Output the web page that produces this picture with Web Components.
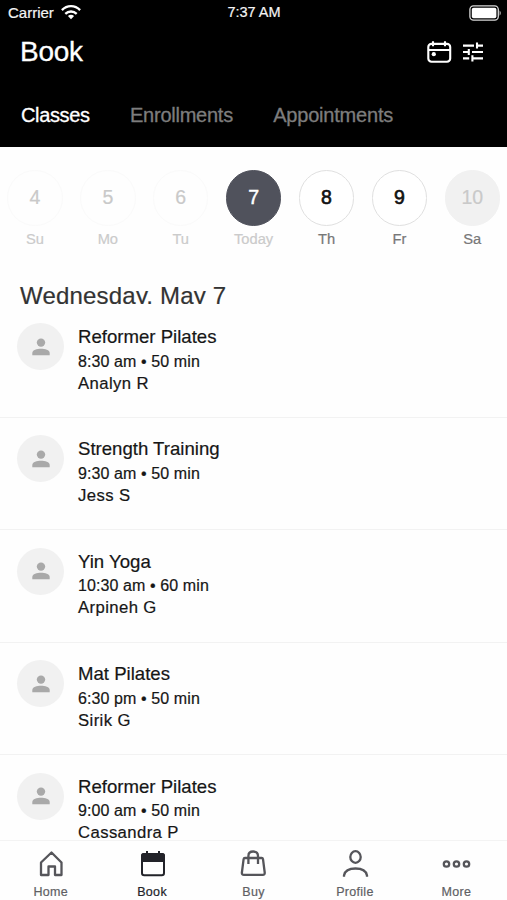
<!DOCTYPE html>
<html lang="en">
<head>
<meta charset="utf-8">
<title>Book</title>
<style>
body{margin:0;background:#fefefe;font-family:"Liberation Sans",Arial,sans-serif;overflow:hidden}
</style>
</head>
<body>
<booking-app></booking-app>
<script>
const define = (name, markup) => customElements.define(name, class extends HTMLElement {
  connectedCallback() {
    if (this.shadowRoot) return;
    this.attachShadow({ mode: 'open' }).innerHTML = typeof markup === 'function' ? markup(this) : markup;
  }
});

define('status-bar', `
<style>
:host{display:grid;grid-template-columns:1fr auto 1fr;align-items:center;height:25px;padding:0 5px 0 8px;color:#f4f4f4;font-size:15px;line-height:25px;-webkit-text-stroke:.2px currentColor}
.left{display:flex;align-items:center;gap:7px}
svg{display:block}
.bat{justify-self:end}
.c{letter-spacing:0}.t{font-size:14.5px;letter-spacing:0;padding-right:2px}
</style>
<div class="left"><span class="c">Carrier</span>
<svg width="20" height="15" viewBox="0 0 20 15" fill="none" stroke="#fff" stroke-width="2.3"><path d="M.9 5.1C6-.1 14-.1 19.1 5.1M4.3 8.8C7.5 5.7 12.5 5.7 15.7 8.8"/><path d="M10 14.2 6.9 11.1Q10 8.6 13.1 11.1Z" fill="#fff" stroke="none"/></svg></div>
<span class="t">7:37 AM</span>
<svg class="bat" width="33" height="16" viewBox="0 0 33 16"><rect x=".9" y=".9" width="28.4" height="14.2" rx="3.6" fill="none" stroke="#d8d8d8" stroke-width="1.3"/><rect x="2.8" y="2.8" width="24.6" height="10.4" rx="1.8" fill="#fff"/><path d="M30.6 5.2q2.2 2.8 0 5.6z" fill="#ddd"/></svg>
`);

define('title-bar', `
<style>
:host{display:flex;justify-content:space-between;align-items:center;height:54px;padding:0 24px 0 20px;color:#fff}
h1{margin:0;font-weight:400;font-size:28px;line-height:54px;letter-spacing:-.3px;-webkit-text-stroke:.3px #fff}
div{display:flex;align-items:center;gap:11px}
svg{display:block}
</style>
<h1><slot></slot></h1>
<div>
<svg width="26" height="24" viewBox="0 0 26 24" fill="none" stroke="#fff" stroke-width="2.1"><rect x="2.300" y="3.900" width="21.900" height="17.800" rx="3.2"/><path d="M2.500 10h21.500M7 1.200v5M19 1.200v5"/><circle cx="7.8" cy="14.2" r="2.1" fill="#fff" stroke="none"/></svg>
<svg width="20" height="20" viewBox="0 0 20 20" fill="none" stroke="#fff" stroke-width="2.1"><path d="M0 3.6h11M14 .6v6M14 3.6h6M0 10h6M5.8 7v6M9 10h11M0 16.4h6.2M9.4 13.3v6.2M9.4 16.4H20"/></svg>
</div>`);

define('tab-strip', `
<style>:host{display:flex;gap:40px;height:67px;align-items:center;padding:0 21px;box-sizing:border-box}</style><slot></slot>`);

define('tab-item', el => `
<style>:host{display:block;font-size:20px;line-height:28px;padding-top:5px;color:${el.hasAttribute('active') ? '#fff' : '#7d7d7d'};letter-spacing:${el.getAttribute('spacing')}px;margin-right:calc(-1px * ${el.getAttribute('spacing')});white-space:nowrap;-webkit-text-stroke:.3px currentColor}</style><slot></slot>`);

define('week-strip', `
<style>:host{display:grid;grid-template-columns:repeat(7,72.9px);margin:0 -1.500px;padding-top:23px;height:110px;box-sizing:border-box}</style><slot></slot>`);

const dayStyles = {
  past: ['#fefefe', '#fafafa', '#c9c9c9', '#cbcbcb', .2],
  today: ['#50525c', '#50525c', '#fff', '#cbcbcb', .5],
  open: ['#fff', '#e0e0e0', '#111', '#777', .6],
  off: ['#f1f1f1', '#f1f1f1', '#c9c9c9', '#777', .2]
};
define('day-cell', el => {
  const [bg, line, num, label, w] = dayStyles[el.getAttribute('state')];
  return `
<style>
:host{display:flex;flex-direction:column;align-items:center;gap:4px}
b{display:flex;align-items:center;justify-content:center;box-sizing:border-box;width:55.500px;height:55.500px;border-radius:50%;background:${bg};border:1px solid ${line};color:${num};font-size:19.5px;font-weight:400;-webkit-text-stroke:${w}px ${num}}
span{font-size:14.7px;line-height:18px;color:${label};-webkit-text-stroke:.2px ${label}}
</style>
<b>${el.getAttribute('num')}</b><span><slot></slot></span>`;
});

define('date-heading', `
<style>:host{display:block;height:19px;margin:28px 0 1.6px;overflow:hidden;padding-left:20px;font-size:24px;line-height:24px;letter-spacing:.2px;color:#333;-webkit-text-stroke:.2px #333}
div{margin-top:-1px}</style><div><slot></slot></div>`);

define('class-row', el => `
<style>
:host{display:flex;gap:14px;box-sizing:border-box;height:112.4px;padding:17.500px 17px 0;border-bottom:1px solid #f2f2f2;color:#161616;-webkit-text-stroke:.2px currentColor}
.av{flex:none;width:47px;height:47px;border-radius:50%;background:#f1f1f1;display:flex;align-items:center;justify-content:center}
svg{display:block}
.x{display:flex;flex-direction:column;white-space:nowrap;font-size:16px}
.n{font-size:18.6px;line-height:24px;padding-top:2px}
.t{line-height:23px;letter-spacing:.1px;padding-top:.5px}
.p{font-size:16.7px;line-height:22px;letter-spacing:.4px}
</style>
<div class="av"><svg width="18" height="18" viewBox="0 0 18 18" fill="#a9a9a9"><circle cx="9" cy="4.6" r="4.2"/><path d="M.3 17.3V15C.3 11.8 5 10.7 9 10.7s8.700 1.100 8.700 4.300v2.300z"/></svg></div>
<div class="x"><span class="n">${el.getAttribute('name')}</span><span class="t">${el.getAttribute('time')}</span><span class="p"><slot></slot></span></div>`);

define('tab-bar', `
<style>:host{display:grid;grid-template-columns:repeat(5,1fr);height:60px;box-sizing:border-box;border-top:1px solid #f3f3f3;background:#fefefe}</style><slot></slot>`);

const icons = {
  home: '<path d="M4 12.500 14.500 2.500 24.500 12.500V25h-6.500v-8.500h-6.500V25H4z" stroke-linejoin="round"/>',
  book: '<rect x="4" y="4" width="22" height="21.200" rx="2.200"/><path d="M3 12V6q0-3 3-3h18q3 0 3 3v6z" fill="#222329" stroke="none"/><path d="M9 1v4M21 1v4"/>',
  buy: '<path d="M5.900 8h16.800q1.100 0 1.300 1.100l1.700 13.400q.3 2.400-2 2.400H4.900q-2.300 0-2-2.400L4.600 9.100Q4.800 8 5.900 8zM9.400 14V5.900Q9.400 1.500 14.200 1.500T19 5.900V14"/>',
  profile: '<ellipse cx="14.500" cy="7" rx="5.200" ry="5.800"/><path d="M3 26.700v-1.300Q4.400 18.500 14.500 18.500t11.500 6.900v1.300"/>',
  more: '<circle cx="4.500" cy="14" r="2.700"/><circle cx="14.500" cy="14" r="2.700"/><circle cx="24.500" cy="14" r="2.700"/>'
};
define('nav-item', el => {
  const on = el.hasAttribute('active');
  return `
<style>
:host{display:flex;flex-direction:column;align-items:center;padding-top:9px;font-size:12.5px;line-height:16px;letter-spacing:.3px;color:${on ? '#222329' : '#606064'}}
svg{display:block;margin-bottom:5.500px;overflow:visible}
span{-webkit-text-stroke:.2px currentColor}
</style>
<svg width="28" height="28" viewBox="0 0 28 28" fill="none" stroke="${on ? '#222329' : '#55555a'}" stroke-width="${on ? 2 : 2.3}">${icons[el.getAttribute('icon')]}</svg><span><slot></slot></span>`;
});

define('booking-app', `
<style>
:host{display:flex;flex-direction:column;width:507px;height:900px;overflow:hidden}
header{background:#000;height:147px;flex:none}
main{flex:1;min-height:0;overflow:hidden}
tab-bar{flex:none}
</style>
<header>
<status-bar></status-bar>
<title-bar>Book</title-bar>
<tab-strip><tab-item active spacing="-.35">Classes</tab-item><tab-item spacing="-.25">Enrollments</tab-item><tab-item spacing="-.2">Appointments</tab-item></tab-strip>
</header>
<main>
<week-strip>
<day-cell num="4" state="past">Su</day-cell><day-cell num="5" state="past">Mo</day-cell><day-cell num="6" state="past">Tu</day-cell><day-cell num="7" state="today">Today</day-cell><day-cell num="8" state="open">Th</day-cell><day-cell num="9" state="open">Fr</day-cell><day-cell num="10" state="off">Sa</day-cell>
</week-strip>
<date-heading>Wednesday, May 7</date-heading>
<class-row name="Reformer Pilates" time="8:30 am • 50 min">Analyn R</class-row>
<class-row name="Strength Training" time="9:30 am • 50 min">Jess S</class-row>
<class-row name="Yin Yoga" time="10:30 am • 60 min">Arpineh G</class-row>
<class-row name="Mat Pilates" time="6:30 pm • 50 min">Sirik G</class-row>
<class-row name="Reformer Pilates" time="9:00 am • 50 min">Cassandra P</class-row>
</main>
<tab-bar>
<nav-item icon="home">Home</nav-item><nav-item icon="book" active>Book</nav-item><nav-item icon="buy">Buy</nav-item><nav-item icon="profile">Profile</nav-item><nav-item icon="more">More</nav-item>
</tab-bar>`);
</script>
</body>
</html>
